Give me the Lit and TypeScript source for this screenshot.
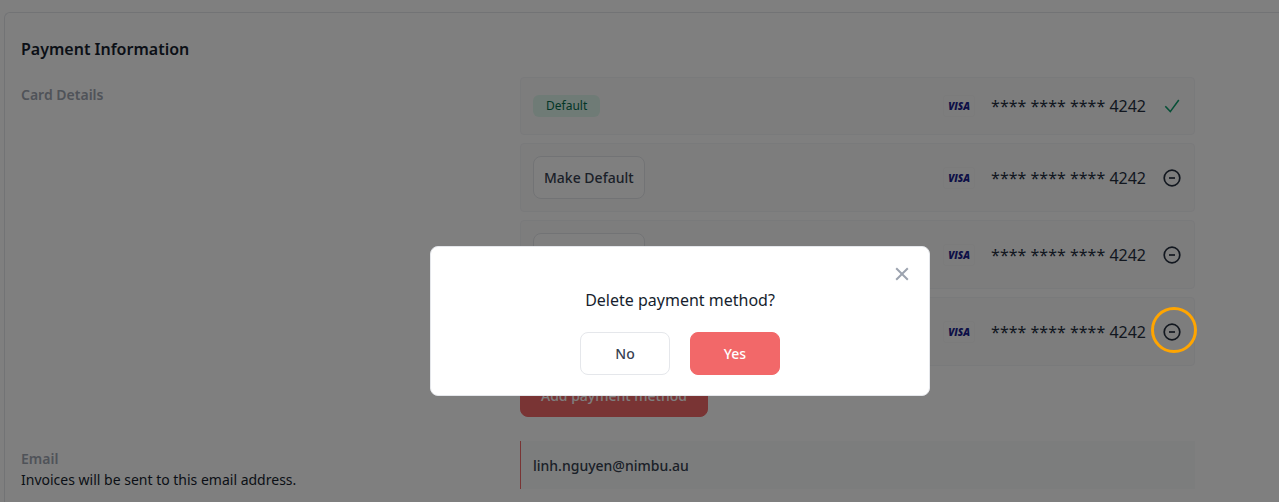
import { LitElement, html, css, svg, nothing } from "lit";
import { customElement, property, state } from "lit/decorators.js";

interface PaymentMethod {
  id: number;
  number: string;
  isDefault: boolean;
}

@customElement("payment-row")
class PaymentRow extends LitElement {
  @property({ attribute: false }) method!: PaymentMethod;
  @property({ type: Boolean }) highlighted = false;

  static styles = css`
    :host {
      display: block;
    }
    .row {
      position: relative;
      display: flex;
      align-items: center;
      justify-content: space-between;
      min-height: 32px;
      padding: 12px;
      border: 1px solid #f3f4f6;
      border-radius: 4px;
      background: #fbfbfb;
    }
    .tag {
      padding: 0 13px;
      border-radius: 6px;
      background: #def7ec;
      color: #046c4e;
      font-size: 12px;
      line-height: 22px;
    }
    .make {
      height: 43px;
      padding: 0 10px;
      border: 1px solid #e5e7eb;
      border-radius: 8px;
      background: #fff;
      color: #374151;
      font: 500 14px/20px "Noto Sans", sans-serif;
    }
    .card {
      display: flex;
      align-items: center;
      gap: 16px;
    }
    .visa {
      width: 30px;
      border: 1px solid #f6f6f6;
      border-radius: 3px;
      color: #1a1f8f;
      font-family: "Open Sans", "Noto Sans", sans-serif;
      font-size: 10px;
      font-style: italic;
      font-weight: 800;
      line-height: 20px;
      text-align: center;
    }
    .number {
      color: #252f3f;
      font-size: 16px;
      line-height: 24px;
    }
    .icon {
      display: flex;
      padding: 0;
      border: 0;
      background: none;
      color: #252f3f;
    }
    .check {
      color: #0e9f6e;
    }
    .ring {
      position: absolute;
      z-index: 20;
      top: 9px;
      right: -3px;
      width: 40px;
      height: 40px;
      border: 3px solid #ffa500;
      border-radius: 50%;
      pointer-events: none;
    }
  `;

  render() {
    const { isDefault, number } = this.method;
    return html`<div class="row">
      ${isDefault
        ? html`<span class="tag">Default</span>`
        : html`<button class="make" type="button">Make Default</button>`}
      <div class="card">
        <span class="visa">VISA</span>
        <span class="number">${number}</span>
        ${isDefault
          ? html`<span class="icon check">
              <svg width="20" height="20" viewBox="0 0 20 20" fill="none" stroke="currentColor" stroke-width="1.6">
                ${svg`<path d="M3.3 10.3 8.3 15.6 16.8 4" />`}
              </svg>
            </span>`
          : html`<button class="icon" type="button" aria-label="Delete" @click=${this.requestDelete}>
              <svg width="20" height="20" viewBox="0 0 20 20" fill="none" stroke="currentColor" stroke-width="1.7">
                ${svg`<circle cx="10" cy="10" r="7.8" /><path d="M7 10h6" />`}
              </svg>
            </button>`}
      </div>
      ${this.highlighted ? html`<span class="ring"></span>` : nothing}
    </div>`;
  }

  private requestDelete() {
    this.dispatchEvent(new CustomEvent("request-delete", { detail: this.method.id }));
  }
}

@customElement("app-root")
class AppRoot extends LitElement {
  @state() private selected: number | null = 4;
  @state() private methods: PaymentMethod[] = [1, 2, 3, 4].map((id) => ({
    id,
    number: "**** **** **** 4242",
    isDefault: id === 1,
  }));

  static styles = css`
    :host {
      display: block;
      height: 100vh;
      overflow: hidden;
      background: #fff;
      color: #161e2e;
      font-family: "Noto Sans", sans-serif;
      font-size: 14px;
      line-height: 20px;
    }
    .panel {
      margin: 12px 0 0 4px;
      padding-bottom: 24px;
      border: 1px solid #e5e7eb;
      border-right: 0;
      border-radius: 6px 0 0 6px;
    }
    .section {
      padding: 24px 84px 12px 16px;
      border-bottom: 1px solid #e5e7eb;
    }
    h2 {
      margin: 0 0 16px;
      font-size: 16px;
      font-weight: 600;
      line-height: 24px;
    }
    .grid {
      display: grid;
      grid-template-columns: 499fr 675fr;
      row-gap: 24px;
    }
    .label {
      display: block;
      padding-top: 8px;
      color: #9fa6b2;
      font-weight: 600;
    }
    .hint {
      margin: 1px 0 0;
    }
    .list {
      display: flex;
      flex-direction: column;
      gap: 8px;
    }
    button {
      height: 43px;
      border: 1px solid #f26869;
      border-radius: 8px;
      background: #f26869;
      color: #fff;
      font: 500 14px/20px "Noto Sans", sans-serif;
    }
    .add {
      align-self: flex-start;
      padding: 0 20px;
    }
    .email {
      box-sizing: border-box;
      width: 100%;
      height: 48px;
      padding: 0 12px;
      border: 0;
      border-left: 1px solid #f26869;
      border-radius: 0;
      outline: 0;
      background: #f9fbfa;
      color: #374151;
      font: 500 14px/20px "Noto Sans", sans-serif;
    }
    .overlay {
      position: fixed;
      z-index: 10;
      inset: 0;
      display: flex;
      align-items: center;
      justify-content: center;
      padding: 140px 0 0 81px;
      background: rgba(0, 0, 0, 0.5);
    }
    .dialog {
      position: relative;
      box-sizing: border-box;
      width: 500px;
      padding: 41px 20px 20px;
      border: 1px solid #e5e7eb;
      border-radius: 8px;
      background: #fff;
      text-align: center;
    }
    .question {
      margin: 0 0 20px;
      font-size: 16px;
      line-height: 24px;
    }
    .actions {
      display: flex;
      justify-content: center;
      gap: 20px;
    }
    .actions button {
      width: 90px;
    }
    .actions .no {
      border-color: #e5e7eb;
      background: #fff;
      color: #374151;
    }
    .close {
      position: absolute;
      top: 17px;
      right: 17px;
      display: flex;
      height: 20px;
      padding: 0;
      border: 0;
      background: none;
      color: #9ca3af;
    }
  `;

  render() {
    return html`
      <section class="panel">
        <div class="section">
          <h2>Payment Information</h2>
          <div class="grid">
            <div><span class="label">Card Details</span></div>
            <div class="list">
              ${this.methods.map(
                (m) => html`<payment-row
                  .method=${m}
                  ?highlighted=${m.id === this.selected}
                  @request-delete=${(e: CustomEvent<number>) => (this.selected = e.detail)}
                ></payment-row>`
              )}
              <button class="add" type="button">Add payment method</button>
            </div>
            <div>
              <label class="label" for="email">Email</label>
              <p class="hint">Invoices will be sent to this email address.</p>
            </div>
            <input class="email" id="email" type="email" value="linh.nguyen@nimbu.au" />
          </div>
        </div>
      </section>
      ${this.selected === null ? nothing : this.renderDialog()}
    `;
  }

  private renderDialog() {
    return html`<div class="overlay">
      <div class="dialog" role="dialog" aria-modal="true" aria-labelledby="question">
        <button class="close" type="button" aria-label="Close" @click=${this.close}>
          <svg width="20" height="20" viewBox="0 0 20 20" fill="none" stroke="currentColor" stroke-width="2">
            <path d="M4.2 4.2 15.8 15.8M15.8 4.2 4.2 15.8" />
          </svg>
        </button>
        <p class="question" id="question">Delete payment method?</p>
        <div class="actions">
          <button class="no" type="button" @click=${this.close}>No</button>
          <button type="button" @click=${this.confirm}>Yes</button>
        </div>
      </div>
    </div>`;
  }

  private close() {
    this.selected = null;
  }

  private confirm() {
    this.methods = this.methods.filter((m) => m.id !== this.selected);
    this.selected = null;
  }
}
